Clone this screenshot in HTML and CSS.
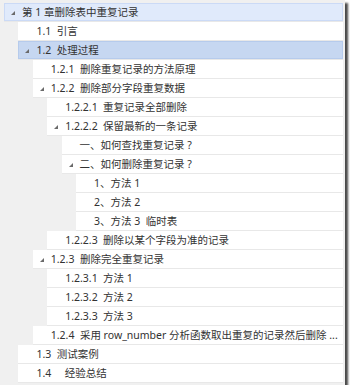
FILE: index.html
```html
<!DOCTYPE html>
<html lang="zh-CN">
<head>
    <meta charset="UTF-8">
    <title>目录</title>
    <link rel="stylesheet" href="styles.css">
</head>
<body>
    <div class="frame">
        <ul class="tree">
            <li>
                <div class="row hover"><span class="arrow"></span>第 1 章删除表中重复记录</div>
                <ul>
                    <li><div class="row">1.1  引言</div></li>
                    <li>
                        <div class="row selected"><span class="arrow"></span>1.2  处理过程</div>
                        <ul>
                            <li><div class="row">1.2.1  删除重复记录的方法原理</div></li>
                            <li>
                                <div class="row"><span class="arrow"></span>1.2.2  删除部分字段重复数据</div>
                                <ul>
                                    <li><div class="row">1.2.2.1  重复记录全部删除</div></li>
                                    <li>
                                        <div class="row"><span class="arrow"></span>1.2.2.2  保留最新的一条记录</div>
                                        <ul>
                                            <li><div class="row">一、如何查找重复记录 ?</div></li>
                                            <li>
                                                <div class="row"><span class="arrow"></span>二、如何删除重复记录 ?</div>
                                                <ul>
                                                    <li><div class="row">1、方法 1</div></li>
                                                    <li><div class="row">2、方法 2</div></li>
                                                    <li><div class="row">3、方法 3  临时表</div></li>
                                                </ul>
                                            </li>
                                        </ul>
                                    </li>
                                    <li><div class="row">1.2.2.3  删除以某个字段为准的记录</div></li>
                                </ul>
                            </li>
                            <li>
                                <div class="row"><span class="arrow"></span>1.2.3  删除完全重复记录</div>
                                <ul>
                                    <li><div class="row">1.2.3.1  方法 1</div></li>
                                    <li><div class="row">1.2.3.2  方法 2</div></li>
                                    <li><div class="row">1.2.3.3  方法 3</div></li>
                                </ul>
                            </li>
                            <li><div class="row">1.2.4  采用 row_number 分析函数取出重复的记录然后删除 ...</div></li>
                        </ul>
                    </li>
                    <li><div class="row">1.3  测试案例</div></li>
                    <li><div class="row">1.4     经验总结</div></li>
                </ul>
            </li>
        </ul>
    </div>
</body>
</html>
```

FILE: styles.css
```css
body {
    margin: 0;
    padding: 0;
    background-color: #ffffff;
    font-family: "Noto Sans", "Noto Sans CJK SC", sans-serif;
    font-size: 10.5px;
    color: #323232;
}
.frame {
    width: 345px;
    height: 385px;
    box-sizing: border-box;
    padding: 3px 2px 0 4px;
    background-color: #f0f0f0;
    box-shadow: 3px 3px 2px #4a4a4a;
}
.tree,
.tree ul {
    list-style: none;
    margin: 0;
    padding: 0;
}
.tree ul {
    margin-left: 14.4px;
}
.row {
    position: relative;
    height: 18px;
    line-height: 18px;
    padding-left: 18px;
    background-color: #ffffff;
    border-bottom: 1px solid #e8e8e8;
    white-space: pre;
    overflow: hidden;
}
.row.hover {
    background-color: #e0eafb;
    box-shadow: inset 0 0 0 1px #cbdaf6;
}
.row.selected {
    background-color: #c6d7f1;
    box-shadow: inset 0 0 0 1px #b6cbec;
}
.arrow {
    position: absolute;
    left: 7px;
    top: 8px;
    width: 0;
    height: 0;
    border-left: 4px solid transparent;
    border-bottom: 4px solid #6a6a6a;
}
```
